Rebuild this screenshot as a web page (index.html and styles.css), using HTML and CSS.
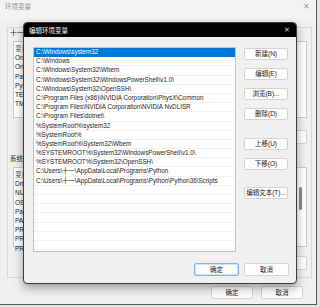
FILE: index.html
```html
<!DOCTYPE html>
<html lang="zh-CN">
<head>
  <meta charset="UTF-8" />
  <title>编辑环境变量</title>
  <link rel="stylesheet" href="styles.css">
</head>
<body>

  <div class="env-window">
    <div class="env-title">
      <span>环境变量</span>
      <span class="env-close">✕</span>
    </div>

    <div class="env-frame">
      <div class="group-label">十一 的用户变量(U)</div>
      <div class="var-list user-list">
        <div class="var-head">变量</div>
        <div class="var-row">OneDrive</div>
        <div class="var-row">OneDriveConsumer</div>
        <div class="var-row">Path</div>
        <div class="var-row">PyCharm Community Edition</div>
        <div class="var-row">TEMP</div>
        <div class="var-row">TMP</div>
      </div>
      <div class="env-btns first">
        <button class="win-btn">新建(N)...</button>
        <button class="win-btn">编辑(E)...</button>
        <button class="win-btn">删除(D)</button>
      </div>

      <div class="group-label second">系统变量(S)</div>
      <div class="var-list sys-list">
        <div class="var-rows">
          <div class="var-head">变量</div>
          <div class="var-row">DriverData</div>
          <div class="var-row">NUMBER_OF_PROCESSORS</div>
          <div class="var-row">OS</div>
          <div class="var-row">Path</div>
          <div class="var-row">PATHEXT</div>
          <div class="var-row">PROCESSOR_ARCHITECTURE</div>
          <div class="var-row">PROCESSOR_IDENTIFIER</div>
          <div class="var-row">PROCESSOR_LEVEL</div>
        </div>
        <div class="scroll-track"><div class="scroll-thumb"></div></div>
      </div>
      <div class="env-btns">
        <button class="win-btn">新建(W)...</button>
        <button class="win-btn">编辑(I)...</button>
        <button class="win-btn">删除(L)</button>
      </div>
    </div>

    <div class="env-footer">
      <button class="win-btn">确定</button>
      <button class="win-btn">取消</button>
    </div>
  </div>

  <div class="edit-dialog">
    <div class="edit-title">
      <span>编辑环境变量</span>
      <span class="edit-close">✕</span>
    </div>

    <div class="edit-body">
      <div class="path-list">
        <div class="path-row selected">C:\Windows\system32</div>
        <div class="path-row">C:\Windows</div>
        <div class="path-row">C:\Windows\System32\Wbem</div>
        <div class="path-row">C:\Windows\System32\WindowsPowerShell\v1.0\</div>
        <div class="path-row">C:\Windows\System32\OpenSSH\</div>
        <div class="path-row">C:\Program Files (x86)\NVIDIA Corporation\PhysX\Common</div>
        <div class="path-row">C:\Program Files\NVIDIA Corporation\NVIDIA NvDLISR</div>
        <div class="path-row">C:\Program Files\dotnet\</div>
        <div class="path-row">%SystemRoot%\system32</div>
        <div class="path-row">%SystemRoot%</div>
        <div class="path-row">%SystemRoot%\System32\Wbem</div>
        <div class="path-row">%SYSTEMROOT%\System32\WindowsPowerShell\v1.0\</div>
        <div class="path-row">%SYSTEMROOT%\System32\OpenSSH\</div>
        <div class="path-row">C:\Users\十一\AppData\Local\Programs\Python</div>
        <div class="path-row">C:\Users\十一\AppData\Local\Programs\Python\Python36\Scripts</div>
        <div class="path-row"></div>
        <div class="path-row"></div>
        <div class="path-row"></div>
        <div class="path-row"></div>
        <div class="path-row"></div>
        <div class="path-row"></div>
        <div class="path-row"></div>
      </div>

      <div class="side-btns">
        <button class="win-btn">新建(N)</button>
        <button class="win-btn">编辑(E)</button>
        <button class="win-btn">浏览(B)...</button>
        <button class="win-btn">删除(D)</button>
        <button class="win-btn gap-up">上移(U)</button>
        <button class="win-btn">下移(O)</button>
        <button class="win-btn gap-text">编辑文本(T)...</button>
      </div>
    </div>

    <div class="edit-footer">
      <button class="win-btn focused">确定</button>
      <button class="win-btn">取消</button>
    </div>
  </div>

</body>
</html>
```

FILE: styles.css
```css
body {
  margin: 0;
  width: 320px;
  height: 307px;
  overflow: hidden;
  background: #e3e3e3;
  font-family: "Liberation Sans", "Noto Sans CJK SC", sans-serif;
  font-size: 6.5px;
  color: #1a1a1a;
}

button {
  font-family: inherit;
}

/* background window */
.env-window {
  width: 317px;
  height: 305px;
  box-sizing: border-box;
  background: #f0f0f0;
  border-right: 1px solid #5a5a5a;
  border-bottom: 1px solid #5a5a5a;
  display: flex;
  flex-direction: column;
}

.env-title {
  height: 20px;
  padding: 3px 6px 0 5px;
  box-sizing: border-box;
  display: flex;
  justify-content: space-between;
  color: #8c8c8c;
  font-size: 6.5px;
  line-height: 8px;
  background: #f3f3f3;
}

.env-close {
  font-size: 8px;
  color: #9a9a9a;
}

.env-frame {
  margin: 7px 4px 0 7px;
  height: 251px;
  box-sizing: border-box;
  border: 1px solid #d9d9d9;
  padding: 0 4px 0 5px;
  display: flex;
  flex-direction: column;
}

.group-label {
  height: 9px;
  line-height: 9px;
  font-size: 7px;
  color: #222;
  margin-left: -3px;
}

.group-label.second {
  margin-top: 10px;
  font-size: 6.5px;
}

.var-list {
  background: #fff;
  border: 1px solid #c9c9c9;
  box-sizing: border-box;
  margin-top: 4px;
  padding-top: 2px;
}

.user-list {
  height: 77px;
}

.sys-list {
  height: 80px;
  display: flex;
}

.var-rows {
  flex: 1;
}

.var-head,
.var-row {
  height: 9.2px;
  line-height: 9.2px;
  padding-left: 1px;
  white-space: nowrap;
}

.var-head {
  color: #444;
}

.scroll-track {
  width: 7px;
  padding-top: 17px;
}

.scroll-thumb {
  width: 3px;
  height: 23px;
  background: #8a8a8a;
  border-radius: 2px;
}

.env-btns {
  display: flex;
  justify-content: flex-end;
  gap: 5px;
  margin-top: 9px;
}

.env-btns.first {
  margin-top: 12px;
}

.env-btns .win-btn {
  width: 44px;
  height: 14px;
}

.env-footer {
  display: flex;
  justify-content: flex-end;
  gap: 8px;
  margin: 8px 13px 0 0;
}

.env-footer .win-btn {
  width: 42px;
  height: 13px;
}

.win-btn {
  background: #fdfdfd;
  border: 1px solid #d3d3d3;
  border-radius: 2px;
  font-size: 6.5px;
  color: #222;
  padding: 0;
  line-height: 10px;
  box-sizing: border-box;
}

/* edit dialog on top */
.edit-dialog {
  position: absolute;
  left: 23px;
  top: 22px;
  width: 274px;
  height: 262px;
  box-sizing: border-box;
  background: #f0f0f0;
  border: 1px solid #3c3c3c;
  border-radius: 4px;
  overflow: hidden;
  box-shadow: 0 4px 10px rgba(0, 0, 0, 0.35);
  display: flex;
  flex-direction: column;
}

.edit-title {
  height: 14px;
  background: #000;
  color: #fff;
  display: flex;
  justify-content: space-between;
  align-items: center;
  padding: 0 6px 0 5px;
  font-size: 6.5px;
}

.edit-close {
  font-size: 7px;
  color: #d0d0d0;
}

.edit-body {
  display: flex;
  padding: 10px 0 0 9px;
}

.path-list {
  width: 203px;
  height: 205px;
  box-sizing: border-box;
  background: #fff;
  border: 1px solid #c2c2c2;
  border-bottom-color: #b9bcc6;
  overflow: hidden;
}

.path-row {
  height: 9.2px;
  line-height: 8.4px;
  box-sizing: border-box;
  border-bottom: 1px solid #f1f1f1;
  padding-left: 2px;
  font-size: 6.3px;
  white-space: nowrap;
  color: #1c1c1c;
}

.path-row.selected {
  background: #0078d7;
  color: #fff;
  border-bottom-color: #0078d7;
}

.side-btns {
  display: flex;
  flex-direction: column;
  margin-left: 8px;
  padding-top: 1px;
  gap: 8px;
}

.side-btns .win-btn {
  width: 44px;
  height: 12px;
}

.side-btns .gap-up {
  margin-top: 10px;
}

.side-btns .gap-text {
  margin-top: 9px;
}

.edit-footer {
  display: flex;
  justify-content: flex-end;
  gap: 5px;
  margin: 11px 7px 0 0;
}

.edit-footer .win-btn {
  width: 45px;
  height: 13px;
}

.win-btn.focused {
  border: 1px solid #7db3e8;
  box-shadow: inset 0 0 0 1px #cfe3f7;
}
```
